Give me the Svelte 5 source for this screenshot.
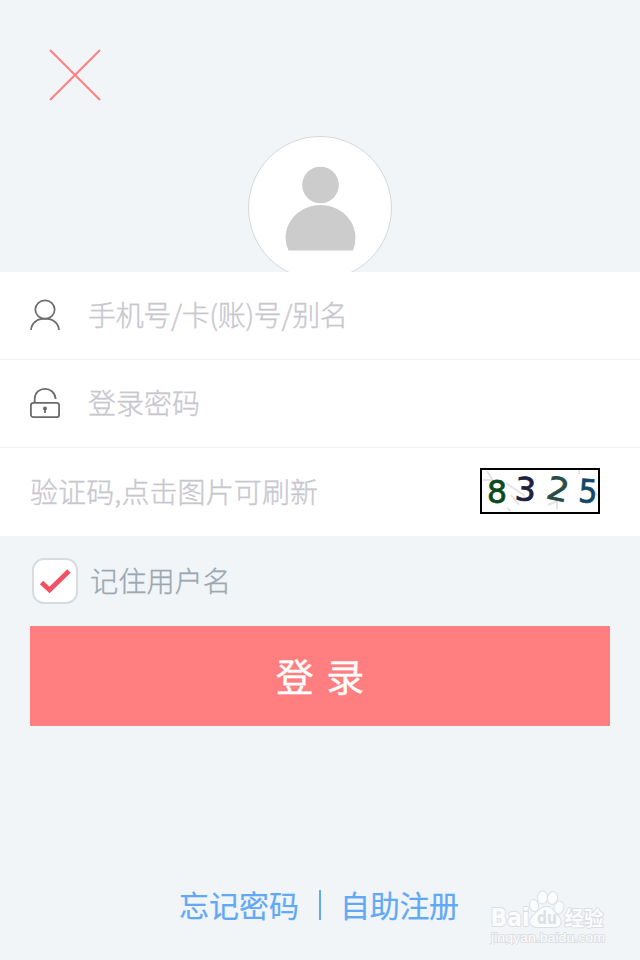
<script>
  let remember = $state(true);
  const digits = [
    { ch: '8', x: 5, y: 33, color: '#0b4a1c', angle: 0, width: 20 },
    { ch: '3', x: 33, y: 30.5, color: '#1b2140', angle: 4, width: 21 },
    { ch: '2', x: 65, y: 30, color: '#294c48', angle: 12, width: 22 },
    { ch: '5', x: 96.500, y: 32.500, color: '#134765', angle: 4, width: 19 }
  ];
</script>

<main class="screen">
  <header>
    <button class="close" aria-label="关闭">
      <svg width="52" height="52" viewBox="0 0 52 52"><path d="M1 1 51 51M51 1 1 51" stroke="#ff7f80" stroke-width="2" /></svg>
    </button>
    <div class="avatar">
      <svg width="144" height="144" viewBox="0 0 144 144">
        <circle cx="72" cy="72" r="71.5" fill="#fff" stroke="#d5d7d9" />
        <circle cx="72.500" cy="49" r="18.300" fill="#ccc" />
        <path d="M40.500 114.500Q37.500 108 37.500 102C37.500 84 53 69 72.500 69S107.500 84 107.500 102Q107.500 108 105 114.500Z" fill="#ccc" />
      </svg>
    </div>
  </header>

  <section class="fields">
    <label class="row">
      <svg class="icon" width="32" height="32" viewBox="0 0 32 32" fill="none" stroke="#6b6b6b" stroke-width="1.700">
        <ellipse cx="16" cy="10.600" rx="9.700" ry="9.200" />
        <path d="M2 31C2.500 24 8 19.700 16 19.700S29.500 24 30 31" />
      </svg>
      <span class="hint account">手机号/卡(账)号/别名</span>
    </label>
    <label class="row">
      <svg class="icon" width="32" height="32" viewBox="0 0 32 32" fill="none" stroke="#6b6b6b" stroke-width="1.800">
        <rect x="1.900" y="15.800" width="28.200" height="14.400" rx="2.500" />
        <path d="M5.700 15.500V11.500C6 5.500 10.500 1.800 16 1.800C21.500 1.800 26 5.500 26.700 12" />
        <circle cx="16" cy="21.500" r="2" fill="#6b6b6b" stroke="none" /><path d="M16 21V26" />
      </svg>
      <span class="hint">登录密码</span>
    </label>
    <label class="row captcha-row">
      <span class="hint code">验证码,点击图片可刷新</span>
      <span class="captcha">
        <svg width="116" height="42" viewBox="0 0 116 42">
          <path d="M5 1 12 12M1 10H10M24 13 43 26M29 25 37 35M66 35 75 31V39M97 0V4M109 18 116 26M25 38 29 41" stroke="#e3e3e6" stroke-width="2" fill="none" />
          {#each digits as d}
            <text x={d.x} y={d.y} fill={d.color} stroke={d.color} transform={`rotate(${d.angle} ${d.x + 9} ${d.y - 11})`} textLength={d.width} lengthAdjust="spacingAndGlyphs">{d.ch}</text>
          {/each}
        </svg>
      </span>
    </label>
  </section>

  <label class="remember">
    <input type="checkbox" bind:checked={remember} />
    <span class="box">
      {#if remember}
        <svg width="42" height="42" viewBox="0 0 42 42"><path d="M7.500 22.500 15.500 30 35 11" fill="none" stroke="#f05264" stroke-width="4.800" /></svg>
      {/if}
    </span>
    <span class="remember-text">记住用户名</span>
  </label>

  <button class="login"><span>登 录</span></button>

  <footer>
    <a href="#forgot">忘记密码</a>
    <span class="bar"></span>
    <a class="register" href="#register">自助注册</a>
  </footer>

  <svg class="watermark" width="130" height="65" viewBox="0 0 130 65">
    <g fill="#fbfcfd" stroke="#dcdfe2" stroke-width="2" paint-order="stroke" stroke-linejoin="round">
      <ellipse cx="49" cy="25.500" rx="4" ry="5.500" transform="rotate(-12 49 25.500)" />
      <ellipse cx="57.500" cy="17.500" rx="4.500" ry="6" />
      <ellipse cx="67.500" cy="18" rx="4.500" ry="6" transform="rotate(12 67.500 18)" />
      <ellipse cx="74" cy="27.500" rx="4.500" ry="6" transform="rotate(15 74 27.500)" />
      <path d="M62 27C67 27 69 32 73 36C79 43 74 48 68 47H53C44 47 43 40 49 35C54 31 56 27 62 27Z" />
      <text x="5.500" y="46" font-size="25" font-weight="700" textLength="39" lengthAdjust="spacingAndGlyphs">Bai</text>
      <text x="79.500" y="46" font-size="20" font-weight="700" textLength="39" lengthAdjust="spacingAndGlyphs">经验</text>
    </g>
    <text x="6" y="62" font-size="12.500" font-family="Liberation Sans" fill="#fbfcfd" stroke="#dde0e3" stroke-width="1.800" paint-order="stroke" textLength="114" lengthAdjust="spacingAndGlyphs">jingyan.baidu.com</text>
    <text x="52" y="44" font-size="18" font-weight="700" fill="#dce0e3" textLength="20" lengthAdjust="spacingAndGlyphs">du</text>
  </svg>
</main>

<style>
  :global(body) { margin: 0; }
  .screen {
    position: relative;
    box-sizing: border-box;
    width: 640px;
    height: 960px;
    display: flex;
    flex-direction: column;
    overflow: hidden;
    background: #f2f5f8;
    font-family: "Noto Sans CJK SC", sans-serif;
  }
  button { border: 0; padding: 0; background: none; font-family: inherit; }
  svg { display: block; }
  header {
    box-sizing: border-box;
    height: 272px;
    flex: none;
    padding-top: 49px;
    overflow: hidden;
  }
  .close { display: block; width: 52px; height: 52px; margin-left: 49px; }
  .avatar { width: 144px; margin: 35px auto 0; }
  .fields { flex: none; background: #fff; height: 264px; }
  .row {
    box-sizing: border-box;
    height: 88px;
    padding: 0 0 2px 29px;
    display: flex;
    align-items: center;
    border-bottom: 1px solid #f1f1f3;
  }
  .icon { flex: none; margin-right: 27px; }
  .hint {
    color: #c8c7ce;
    font-size: 28px;
    font-weight: 300;
    line-height: 40px;
    white-space: nowrap;
    padding-bottom: 2px;
    -webkit-text-stroke: 0.35px #c8c7ce;
  }
  .account { letter-spacing: -0.35px; }
  .captcha-row { justify-content: space-between; padding: 0 40px 0 30px; border: 0; }
  .code { padding-bottom: 3px; letter-spacing: 0.1px; }
  .captcha {
    box-sizing: border-box;
    width: 120px;
    height: 46px;
    border: 2px solid #000;
    margin-top: -2px;
  }
  .captcha text { font: 32px/1 "DejaVu Sans", sans-serif; stroke-width: 0.8px; }
  .remember { display: flex; align-items: center; height: 46px; margin: 22px 0 0 32px; flex: none; }
  .remember input { position: absolute; opacity: 0; }
  .box {
    box-sizing: border-box;
    width: 46px;
    height: 46px;
    border: 2px solid #d9dcdf;
    border-radius: 12px;
    background: #fff;
  }
  .remember-text {
    margin-left: 12px;
    padding-bottom: 2px;
    color: #9aa8b1;
    font-size: 28.2px;
    font-weight: 300;
    line-height: 40px;
    -webkit-text-stroke: 0.35px #9aa8b1;
  }
  .login {
    width: 580px;
    height: 100px;
    margin: 22px 30px 0;
    flex: none;
    background: #ff7f80;
    color: #fff;
    font-size: 38px;
    line-height: 97px;
    word-spacing: 4px;
  }
  .login span { display: block; height: 100px; -webkit-text-stroke: 0.3px #fff; }
  footer { display: flex; align-items: center; height: 44px; margin: 157px 0 0 179px; }
  footer a { padding-bottom: 2px; color: #62a9f5; font-size: 30px; line-height: 40px; text-decoration: none; -webkit-text-stroke: 0.2px #62a9f5; }
  .register { margin-left: -1px; letter-spacing: -0.3px; }
  .bar { width: 2px; height: 30px; margin: 0 20px; background: #62a9f5; }
  .watermark { position: absolute; left: 485px; top: 880px; font-family: "DejaVu Sans", "Noto Sans CJK SC", sans-serif; }
</style>
